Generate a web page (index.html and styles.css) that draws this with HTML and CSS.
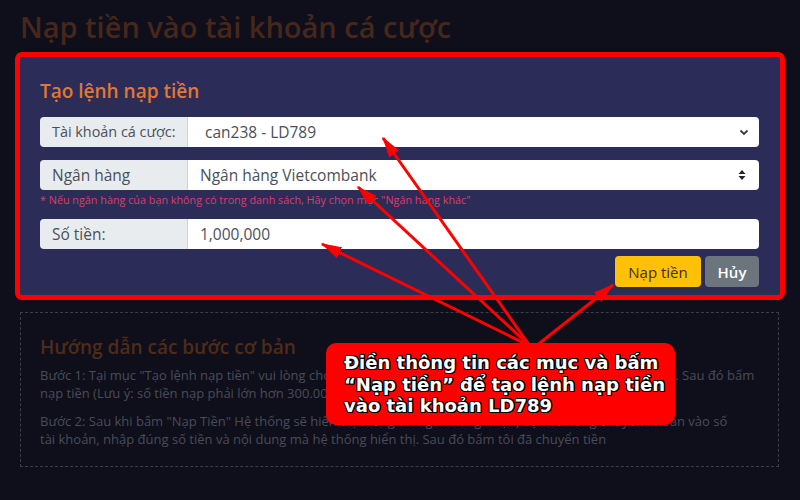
FILE: index.html
```html
<!DOCTYPE html>
<html lang="vi">
<head>
<meta charset="utf-8">
<title>Nạp tiền</title>
<link rel="stylesheet" href="styles.css">
</head>
<body>
<div class="page">
  <h1 class="title">Nạp tiền vào tài khoản cá cược</h1>

  <section class="frame">
    <div class="panel">
      <h2 class="panel-title">Tạo lệnh nạp tiền</h2>

      <div class="group">
        <span class="label label-tight">Tài khoản cá cược:</span>
        <span class="field field-wide">can238 - LD789
          <svg class="chev" width="10" height="8" viewBox="0 0 10 8"><path d="M1.5 2.5 L5 6 L8.5 2.5" fill="none" stroke="#343a40" stroke-width="1.8"/></svg>
        </span>
      </div>

      <div class="group">
        <span class="label">Ngân hàng</span>
        <span class="field">Ngân hàng Vietcombank
          <svg class="updown" width="8" height="12" viewBox="0 0 8 12"><path d="M0.5 5 L4 1 L7.5 5 Z M0.5 7 L4 11 L7.5 7 Z" fill="#212529"/></svg>
        </span>
      </div>
      <p class="note">* Nếu ngân hàng của bạn không có trong danh sách, Hãy chọn mục "Ngân hàng khác"</p>

      <div class="group">
        <span class="label">Số tiền:</span>
        <span class="field">1,000,000</span>
      </div>

      <div class="actions">
        <button class="btn btn-yellow">Nạp tiền</button>
        <button class="btn btn-gray">Hủy</button>
      </div>
    </div>
  </section>

  <section class="guide">
    <h2 class="guide-title">Hướng dẫn các bước cơ bản</h2>
    <p class="step">Bước 1: Tại mục "Tạo lệnh nạp tiền" vui lòng chọn ngân hàng của bạn, nhập số tiền cần nạp vào tài khoản. Sau đó bấm<br>nạp tiền (Lưu ý: số tiền nạp phải lớn hơn 300.000 VNĐ)</p>
    <p class="step">Bước 2: Sau khi bấm "Nạp Tiền" Hệ thống sẽ hiển thị thông tin ngân hàng nhận, bạn vui lòng chuyển khoản vào số<br>tài khoản, nhập đúng số tiền và nội dung mà hệ thống hiển thị. Sau đó bấm tôi đã chuyển tiền</p>
  </section>

  <svg class="arrows" width="800" height="500" viewBox="0 0 800 500">
    <defs>
      <marker id="ah" markerWidth="7" markerHeight="4" refX="6.5" refY="2" orient="auto" markerUnits="strokeWidth">
        <path d="M0 0 L7 2 L0 4 Z" fill="#f00"/>
      </marker>
    </defs>
    <g stroke="#f00" stroke-width="3" fill="none">
      <line x1="530" y1="346" x2="383" y2="138" marker-end="url(#ah)"/>
      <line x1="530" y1="346" x2="358" y2="187" marker-end="url(#ah)"/>
      <line x1="530" y1="346" x2="322" y2="244" marker-end="url(#ah)"/>
      <line x1="536" y1="346" x2="613" y2="285" marker-end="url(#ah)"/>
    </g>
  </svg>

  <div class="callout">Điền thông tin các mục và bấm<br>“Nạp tiền” để tạo lệnh nạp tiền<br>vào tài khoản LD789</div>
</div>
</body>
</html>
```

FILE: styles.css
```css
* { box-sizing: border-box; }
html, body { margin: 0; padding: 0; }
body {
  background: #0e0f1b;
  font-family: "Open Sans", "Noto Sans", sans-serif;
  width: 800px;
  height: 500px;
  overflow: hidden;
}
.page {
  position: relative;
  width: 800px;
  height: 500px;
  padding: 0 15px;
}
.title {
  margin: 0;
  height: 52px;
  padding: 7px 0 0 5px;
  font-size: 29px;
  line-height: 40px;
  font-weight: 600;
  color: #47271a;
}
.frame {
  border: 5px solid #f00;
  border-radius: 7px;
  background: #2c2c58;
  height: 248px;
}
.panel {
  padding: 21px 21px 0 20px;
}
.panel-title {
  margin: 0 0 12px;
  font-size: 19px;
  line-height: 27px;
  font-weight: 600;
  color: #e27830;
}
.group {
  display: flex;
  height: 30px;
  border-radius: 4px;
  overflow: hidden;
  margin-bottom: 13px;
  font-size: 15.5px;
  line-height: 30px;
}
.label {
  width: 148px;
  flex: none;
  background: #e9ecef;
  color: #4a5057;
  padding-left: 12px;
  border-right: 1px solid #ced4da;
  white-space: nowrap;
}
.label-tight { font-size: 14.4px; }
.field {
  flex: 1;
  background: #fff;
  color: #495057;
  padding-left: 12px;
  display: flex;
  align-items: center;
  justify-content: space-between;
  padding-right: 10px;
}
.field-wide { padding-left: 17px; }
.updown { margin-right: 3px; }
.note {
  margin: -11px 0 11px;
  font-size: 10.8px;
  line-height: 16px;
  color: #d8406a;
}
.group + .note + .group { margin-bottom: 7px; }
.actions {
  display: flex;
  justify-content: flex-end;
  gap: 4px;
}
.btn {
  border: 0;
  border-radius: 4px;
  height: 31px;
  font-family: "Open Sans", "Noto Sans", sans-serif;
  font-size: 15px;
  padding: 0;
}
.btn-yellow {
  width: 86px;
  background: #ffc107;
  color: #3a3020;
}
.btn-gray {
  width: 54px;
  background: #6c757d;
  color: #fff;
  font-weight: 600;
}
.guide {
  margin: 12px 6px 0 5px;
  height: 155px;
  border: 1px dashed #3c3d4e;
  padding: 21px 19px 0 19px;
}
.guide-title {
  margin: 0 0 6px;
  font-size: 19px;
  line-height: 26px;
  font-weight: 600;
  color: #4e2c18;
}
.step {
  margin: 0 0 10px;
  font-size: 13px;
  line-height: 18px;
  color: #4b4b58;
  white-space: nowrap;
}
.arrows {
  position: absolute;
  left: 0;
  top: 0;
  pointer-events: none;
}
.callout {
  position: absolute;
  left: 326px;
  top: 343px;
  width: 349px;
  height: 82px;
  background: #f00;
  border-radius: 10px;
  padding: 9px 0 0 18px;
  font-family: "DejaVu Sans", "Liberation Sans", sans-serif;
  font-weight: 700;
  font-size: 18px;
  line-height: 21.5px;
  color: #fff;
  white-space: nowrap;
  text-shadow: -1px -1px 0 #000, 1px -1px 0 #000, -1px 1px 0 #000, 1px 1px 0 #000, 0 1px 0 #000, 1px 0 0 #000, 0 -1px 0 #000, -1px 0 0 #000;
}
```
